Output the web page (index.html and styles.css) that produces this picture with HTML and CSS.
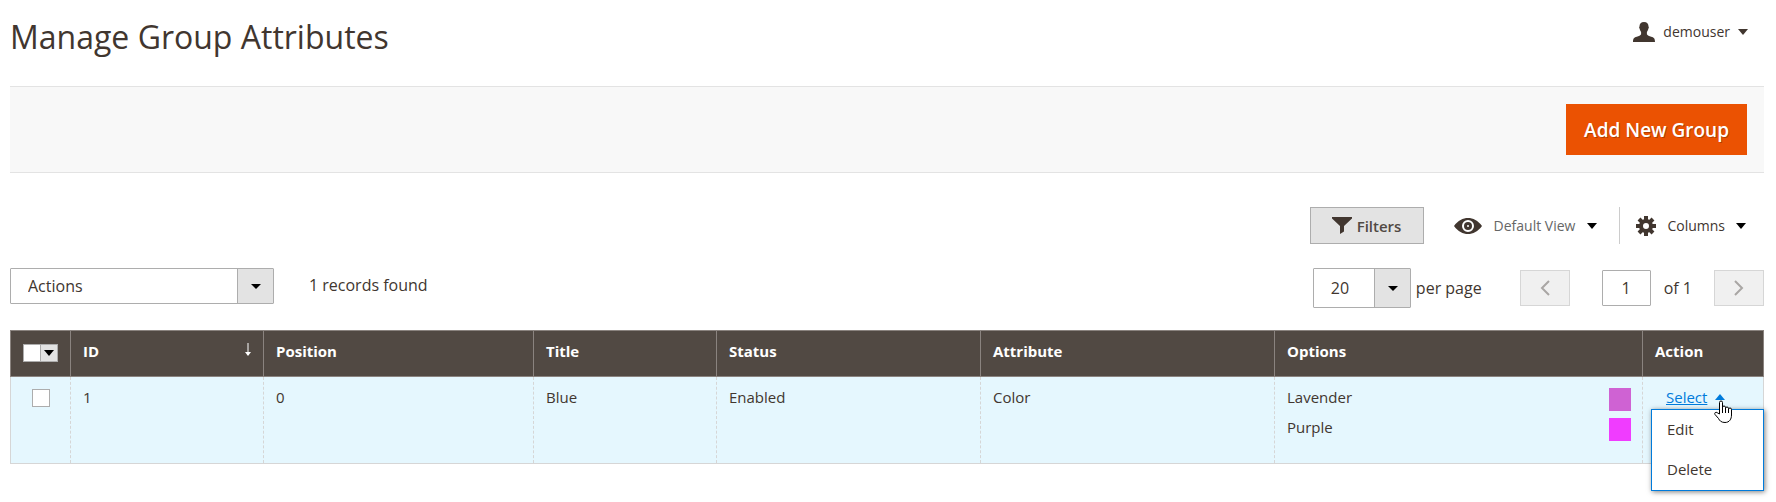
FILE: index.html
```html
<!DOCTYPE html>
<html lang="en">
<head>
  <meta charset="UTF-8" />
  <meta name="viewport" content="width=device-width, initial-scale=1" />
  <title>Manage Group Attributes</title>
  <link rel="stylesheet" href="styles.css">
</head>
<body>
  <!-- Page header -->
  <header class="page-header">
    <h1>Manage Group Attributes</h1>
    <button type="button" class="link-button user-menu">
      <svg class="icon-user" viewBox="0 0 22 20" aria-hidden="true"><path d="M11 0c3 0 4.600 1.800 4.500 4.500.6.300.4 1.800-.2 2.300-.2 1.400-.8 2.400-1.400 3.200v2.300c.5 1.400 2.300 1.700 4.300 2.400 2.500.8 3.800 1.300 3.800 5.300H0c0-4 1.300-4.500 3.800-5.300 2-.7 3.800-1 4.300-2.400V10C7.500 9.200 6.900 8.200 6.700 6.800c-.6-.5-.8-2-.2-2.300C6.400 1.800 8 0 11 0z"/></svg>
      <span class="user-name">demouser</span>
      <span class="caret"></span>
    </button>
  </header>

  <div class="page-actions">
    <button type="button" class="primary">Add New Group</button>
  </div>

  <!-- Grid controls -->
  <div class="grid-controls">
    <button type="button" class="filters">
      <svg class="icon-filter" viewBox="0 0 20 17" aria-hidden="true"><path d="M0 0h20v1.500L12 9v5.500L8 17V9L0 1.500z"/></svg>
      Filters
    </button>
    <button type="button" class="link-button view-button">
      <svg class="icon-eye" viewBox="0 0 28 16" aria-hidden="true"><path fill-rule="evenodd" d="M0 8C4 2.500 9 0 14 0s10 2.500 14 8c-4 5.500-9 8-14 8S4 13.500 0 8zm14-6a6 6 0 1 0 0 12 6 6 0 0 0 0-12z"/><circle cx="14" cy="8" r="4"/><circle class="pupil" cx="14" cy="8" r="1"/></svg>
      <span class="view-name">Default View</span>
      <span class="caret"></span>
    </button>
    <button type="button" class="link-button columns-button">
      <svg class="icon-gear" viewBox="0 0 20 20" aria-hidden="true"><path class="teeth" d="M10 0v5M10 15v5M0 10h5M15 10h5M3 3l4 4M13 13l4 4M17 3l-4 4M7 13l-4 4"/><circle class="ring" cx="10" cy="10" r="5"/></svg>
      <span>Columns</span>
      <span class="caret"></span>
    </button>
  </div>

  <div class="grid-toolbar">
    <div class="select-box mass-actions">
      <select aria-label="Actions">
        <option>Actions</option>
        <option>Delete</option>
      </select>
    </div>
    <span class="records">1 records found</span>
    <div class="pager">
      <div class="select-box page-size">
        <select id="page-size">
          <option>20</option>
          <option>50</option>
          <option>100</option>
        </select>
      </div>
      <label class="per-page" for="page-size">per page</label>
      <button type="button" class="page-button" aria-label="Previous page" disabled>
        <svg viewBox="0 0 10 16" aria-hidden="true"><path d="M9 1L2 8l7 7"/></svg>
      </button>
      <input type="text" id="page-current" class="page-current" value="1">
      <label class="page-total" for="page-current">of 1</label>
      <button type="button" class="page-button" aria-label="Next page" disabled>
        <svg viewBox="0 0 10 16" aria-hidden="true"><path d="M1 1l7 7-7 7"/></svg>
      </button>
    </div>
  </div>

  <!-- Data grid -->
  <table class="data-grid">
    <colgroup>
      <col class="col-check">
      <col class="col-id">
      <col class="col-position">
      <col class="col-title">
      <col class="col-status">
      <col class="col-attribute">
      <col class="col-options">
      <col class="col-action">
    </colgroup>
    <thead>
      <tr>
        <th>
          <div class="multicheck">
            <input type="checkbox" aria-label="Select all">
            <button type="button" aria-label="Selection options"><span class="caret"></span></button>
          </div>
        </th>
        <th>
          <div class="sorted">
            ID
            <svg class="icon-sort" viewBox="0 0 6 13" aria-hidden="true"><path d="M3 0v12"/><path class="head" d="M0 9h6l-3 4z"/></svg>
          </div>
        </th>
        <th>Position</th>
        <th>Title</th>
        <th>Status</th>
        <th>Attribute</th>
        <th>Options</th>
        <th>Action</th>
      </tr>
    </thead>
    <tbody>
      <tr>
        <td class="check-cell"><input type="checkbox" aria-label="Select row 1"></td>
        <td>1</td>
        <td>0</td>
        <td>Blue</td>
        <td>Enabled</td>
        <td>Color</td>
        <td>
          <ul class="options">
            <li>Lavender <span class="swatch lavender"></span></li>
            <li>Purple <span class="swatch purple"></span></li>
          </ul>
        </td>
        <td>
          <div class="row-action">
            <a href="#" class="select-link">Select</a>
            <span class="caret caret-up"></span>
            <ul class="action-menu">
              <li><a href="#">Edit</a></li>
              <li><a href="#">Delete</a></li>
            </ul>
            <svg class="pointer" viewBox="0 0 18 23" aria-hidden="true"><path d="M5.500 14V2.500a1.500 1.500 0 0 1 3 0V9 7.500a1.500 1.500 0 0 1 3 0V10 8.500a1.500 1.500 0 0 1 3 0V11 9.500a1.500 1.500 0 0 1 3 0V15c0 4-2 7.500-6.500 7.500-4 0-5.500-2-6.500-4L1 14.500c-1-1.500.8-3 2.200-1.800z"/><path d="M8.500 8v5M11.500 9v4M14.500 10v3"/></svg>
          </div>
        </td>
      </tr>
    </tbody>
  </table>
</body>
</html>
```
FILE: styles.css
```css
* {
  box-sizing: border-box;
  margin: 0;
  padding: 0;
}
body {
  min-height: 100vh;
  font-family: "Open Sans", Arial, sans-serif;
  font-size: 16px;
  line-height: 20px;
  color: #41362f;
  background: #fff;
  padding: 0 12px 12px 10px;
}
button, input, select {
  font: inherit;
  color: inherit;
}
ul {
  list-style: none;
}
svg {
  fill: #41362f;
  flex: none;
}
.link-button {
  display: flex;
  align-items: center;
  border: none;
  background: none;
  font-size: 14px;
  cursor: pointer;
}
.caret {
  flex: none;
  border: 5px solid transparent;
  border-top: 6px solid #000;
  border-bottom: none;
}
.caret-up {
  border-top: none;
  border-bottom: 6px solid #007bdb;
}

/* Page header */
.page-header {
  display: flex;
  justify-content: space-between;
  align-items: flex-start;
  height: 86px;
}
h1 {
  font-size: 32px;
  line-height: 44px;
  font-weight: 400;
  padding-top: 15px;
}
.user-menu {
  height: 63px;
  padding-right: 16px;
  gap: 8px;
}
.user-menu .caret {
  border-top-color: #41362f;
}
.icon-user {
  width: 22px;
  height: 20px;
}
.page-actions {
  display: flex;
  justify-content: flex-end;
  padding: 17px;
  background: #f8f8f8;
  border-top: 1px solid #e3e3e3;
  border-bottom: 1px solid #e3e3e3;
}
.primary {
  height: 51px;
  padding: 0 18px;
  border: none;
  background: #eb5202;
  color: #fff;
  font-size: 19px;
  font-weight: 600;
  text-shadow: 1px 1px 0 rgba(0, 0, 0, 0.25);
}

/* Grid controls */
.grid-controls {
  display: flex;
  justify-content: flex-end;
  margin-top: 34px;
}
.filters {
  display: flex;
  align-items: center;
  justify-content: center;
  gap: 5px;
  width: 114px;
  height: 37px;
  border: 1px solid #adadad;
  background: #e3e3e3;
  font-size: 15px;
  font-weight: 600;
  color: #514943;
}
.icon-filter {
  width: 20px;
  height: 17px;
}
.view-button {
  gap: 12px;
  padding: 0 22px 0 30px;
}
.view-name {
  color: #666;
}
.icon-eye {
  width: 28px;
  height: 16px;
}
.pupil {
  fill: #fff;
}
.columns-button {
  gap: 11px;
  padding: 0 18px 0 16px;
  border-left: 1px solid #ccc;
}
.icon-gear {
  width: 20px;
  height: 20px;
  fill: none;
  stroke: #41362f;
}
.teeth {
  stroke-width: 4;
}
.ring {
  stroke-width: 4;
}

/* Toolbar */
.grid-toolbar {
  display: flex;
  align-items: flex-start;
  margin-top: 24px;
}
.select-box {
  position: relative;
}
.select-box select {
  width: 100%;
  height: 100%;
  padding: 0 17px 1px;
  border: 1px solid #adadad;
  border-radius: 1px;
  background: linear-gradient(to left, #e3e3e3 35px, #adadad 35px, #adadad 36px, #fff 36px);
  appearance: none;
}
.select-box::after {
  content: "";
  position: absolute;
  top: 50%;
  right: 13px;
  margin-top: -2px;
  border: 5px solid transparent;
  border-top-color: #000;
  border-bottom: none;
  pointer-events: none;
}
.mass-actions {
  width: 264px;
  height: 36px;
}
.records {
  padding-left: 35px;
  line-height: 34px;
}
.pager {
  display: flex;
  align-items: center;
  margin-left: auto;
}
.page-size {
  width: 98px;
  height: 40px;
}
.per-page {
  padding: 0 38px 0 5px;
}
.page-button {
  display: grid;
  place-items: center;
  width: 50px;
  height: 36px;
  border: 1px solid #d6d6d6;
  background: #f0f0f0;
}
.page-button svg {
  width: 10px;
  height: 16px;
  fill: none;
  stroke: #a9a6a4;
  stroke-width: 2;
}
.page-current {
  width: 49px;
  height: 36px;
  margin-left: 32px;
  border: 1px solid #adadad;
  border-radius: 1px;
  text-align: center;
}
.page-total {
  padding: 0 22px 0 13px;
}

/* Data grid */
.data-grid {
  width: 100%;
  margin-top: 22px;
  table-layout: fixed;
  border-collapse: collapse;
  font-size: 15px;
}
.col-check { width: 60px; }
.col-id { width: 193px; }
.col-position { width: 270px; }
.col-title { width: 183px; }
.col-status { width: 264px; }
.col-attribute { width: 294px; }
.col-options { width: 368px; }
.col-action { width: 121px; }
.data-grid th {
  height: 46px;
  padding: 0 12px 5px;
  background: #514943;
  border: 1px solid #8a837f;
  color: #fff;
  font-weight: 700;
  text-align: left;
}
.data-grid th:first-child {
  padding-bottom: 1px;
}
.data-grid td {
  height: 87px;
  padding: 10px 11px 0 12px;
  background: #e5f7fe;
  border: 1px solid #d6d6d6;
  border-left-style: dashed;
  border-right-style: dashed;
  vertical-align: top;
}
.data-grid td:first-child {
  border-left-style: solid;
}
.data-grid td:last-child {
  border-right-style: solid;
}
.data-grid input {
  display: block;
  width: 18px;
  height: 18px;
  border: 1px solid #adadad;
  background: #fff;
  appearance: none;
}
.data-grid .check-cell {
  padding: 12px 21px;
}
.multicheck {
  display: flex;
}
.multicheck button {
  display: grid;
  place-items: center;
  width: 17px;
  height: 18px;
  border: 1px solid #adadad;
  border-left: none;
  background: #e3e3e3;
}
.sorted {
  display: flex;
  justify-content: space-between;
}
.icon-sort {
  width: 6px;
  height: 13px;
  margin-top: 2px;
  stroke: #fff;
}
.head {
  fill: #fff;
  stroke: none;
}
.options li {
  display: flex;
  justify-content: space-between;
  margin-bottom: 6px;
}
.swatch {
  width: 22px;
  height: 23px;
  margin-top: 1px;
}
.lavender {
  background: #cf62d3;
}
.purple {
  background: #f03cff;
}

/* Row action menu */
.row-action {
  position: relative;
  display: flex;
  align-items: center;
  gap: 8px;
  padding-left: 11px;
}
.select-link {
  color: #007bdb;
}
.action-menu {
  position: absolute;
  top: 22px;
  right: -12px;
  width: 113px;
  background: #fff;
  border: 1px solid #007bdb;
  box-shadow: 1px 1px 5px rgba(0, 0, 0, 0.5);
}
.action-menu a {
  display: block;
  padding: 9px 15px 11px;
  color: #41362f;
  text-decoration: none;
}
.pointer {
  position: absolute;
  top: 13px;
  left: 59px;
  width: 18px;
  height: 23px;
  fill: #fff;
  stroke: #000;
}
```
